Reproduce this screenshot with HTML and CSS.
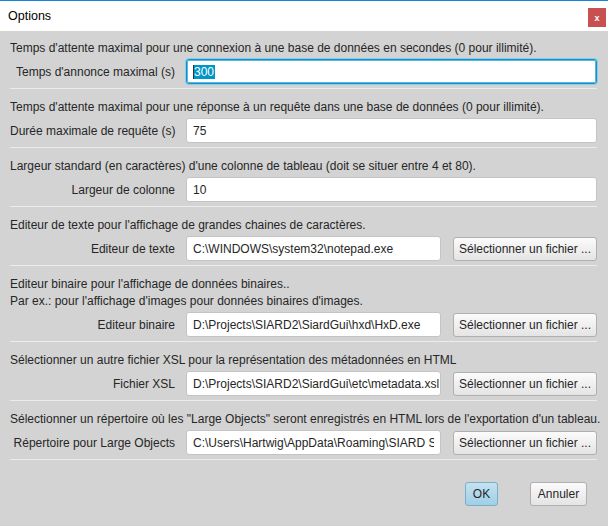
FILE: index.html
```html
<!DOCTYPE html>
<html lang="fr">
<head>
<meta charset="utf-8">
<title>Options</title>
<link rel="stylesheet" href="styles.css">
</head>
<body>
<div class="window">
  <div class="titlebar">
    <span class="title">Options</span>
    <span class="close">x</span>
  </div>
  <div class="content">
    <section class="group">
      <p class="desc">Temps d'attente maximal pour une connexion à une base de données en secondes (0 pour illimité).</p>
      <div class="row">
        <span class="lbl">Temps d'annonce maximal (s)</span>
        <div class="field focused"><span class="caret"></span><span class="sel">300</span></div>
      </div>
    </section>
    <section class="group">
      <p class="desc">Temps d'attente maximal pour une réponse à un requête dans une base de données (0 pour illimité).</p>
      <div class="row">
        <span class="lbl">Durée maximale de requête (s)</span>
        <div class="field">75</div>
      </div>
    </section>
    <section class="group">
      <p class="desc">Largeur standard (en caractères) d'une colonne de tableau (doit se situer entre 4 et 80).</p>
      <div class="row">
        <span class="lbl">Largeur de colonne</span>
        <div class="field">10</div>
      </div>
    </section>
    <section class="group">
      <p class="desc">Editeur de texte pour l'affichage de grandes chaines de caractères.</p>
      <div class="row">
        <span class="lbl">Editeur de texte</span>
        <div class="field">C:\WINDOWS\system32\notepad.exe</div>
        <button class="btn file">Sélectionner un fichier ...</button>
      </div>
    </section>
    <section class="group">
      <p class="desc">Editeur binaire pour l'affichage de données binaires..<br>Par ex.: pour l'affichage d'images pour données binaires d'images.</p>
      <div class="row">
        <span class="lbl">Editeur binaire</span>
        <div class="field">D:\Projects\SIARD2\SiardGui\hxd\HxD.exe</div>
        <button class="btn file">Sélectionner un fichier ...</button>
      </div>
    </section>
    <section class="group">
      <p class="desc">Sélectionner un autre fichier XSL pour la représentation des métadonnées en HTML</p>
      <div class="row">
        <span class="lbl">Fichier XSL</span>
        <div class="field">D:\Projects\SIARD2\SiardGui\etc\metadata.xsl</div>
        <button class="btn file">Sélectionner un fichier ...</button>
      </div>
    </section>
    <section class="group">
      <p class="desc">Sélectionner un répertoire où les "Large Objects" seront enregistrés en HTML lors de l'exportation d'un tableau.</p>
      <div class="row">
        <span class="lbl">Répertoire pour Large Objects</span>
        <div class="field"><span class="clip">C:\Users\Hartwig\AppData\Roaming\SIARD Suite\lobs</span></div>
        <button class="btn file">Sélectionner un fichier ...</button>
      </div>
    </section>
    <div class="actions">
      <button class="btn default ok">OK</button>
      <button class="btn cancel">Annuler</button>
    </div>
  </div>
</div>
</body>
</html>
```

FILE: styles.css
```css
html, body {
  margin: 0;
  padding: 0;
}

body {
  font-family: "Liberation Sans", Arial, sans-serif;
  font-size: 12px;
  color: #262626;
}

.window {
  width: 608px;
  height: 526px;
  box-sizing: border-box;
  background: #d3d3d3;
  border-top: 1px solid #1883d7;
  display: flex;
  flex-direction: column;
  overflow: hidden;
}

.titlebar {
  height: 30px;
  background: #ffffff;
  display: flex;
  justify-content: space-between;
  align-items: flex-start;
  padding-left: 8px;
}

.title {
  line-height: 30px;
  font-size: 12.5px;
  color: #000;
}

.close {
  width: 18px;
  height: 19px;
  margin-top: 7px;
  margin-right: 2px;
  background: #c75050;
  color: #fff;
  font-weight: bold;
  font-size: 9px;
  display: flex;
  align-items: center;
  justify-content: center;
}

.content {
  padding: 9px 11px 0 10px;
}

.group {
  padding-bottom: 4px;
  border-bottom: 1px solid #ececec;
  margin-bottom: 10px;
}

.desc {
  margin: 0;
  line-height: 17px;
  white-space: nowrap;
}

.row {
  display: flex;
  align-items: center;
  height: 25px;
  margin-top: 2px;
}

.lbl {
  width: 165px;
  flex: none;
  text-align: right;
  margin-right: 11px;
  white-space: nowrap;
}

.field {
  flex: 1;
  min-width: 0;
  height: 25px;
  box-sizing: border-box;
  background: #ffffff;
  border: 1px solid #c4c4c4;
  border-radius: 3px;
  padding: 0 6px;
  display: flex;
  align-items: center;
  overflow: hidden;
  white-space: nowrap;
}

.clip {
  display: block;
  min-width: 0;
  overflow: hidden;
  white-space: nowrap;
}

.field.focused {
  border-color: #0a93d2;
  box-shadow: 0 0 0 1px #8ecbea, inset 0 0 0 1px #5bb6e2;
}

.caret {
  width: 1px;
  height: 14px;
  background: #333;
  flex: none;
}

.sel {
  background: #0096c9;
  color: #fff;
  line-height: 14px;
  padding-right: 1px;
}

.btn {
  font-family: inherit;
  font-size: 12px;
  color: #262626;
  height: 24px;
  padding: 0;
  box-sizing: border-box;
  border: 1px solid #b0b0b0;
  border-radius: 3px;
  background: linear-gradient(#fbfbfb, #e4e4e4);
}

.btn.file {
  width: 144px;
  flex: none;
  margin-left: 12px;
}

.actions {
  display: flex;
  justify-content: flex-end;
  gap: 32px;
  margin-top: 22px;
  margin-right: 10px;
}

.btn.ok {
  width: 33px;
}

.btn.cancel {
  width: 57px;
}

.btn.default {
  background: linear-gradient(#c3e2f1, #a0cfe7);
  border-color: #7aafcc;
}
```
